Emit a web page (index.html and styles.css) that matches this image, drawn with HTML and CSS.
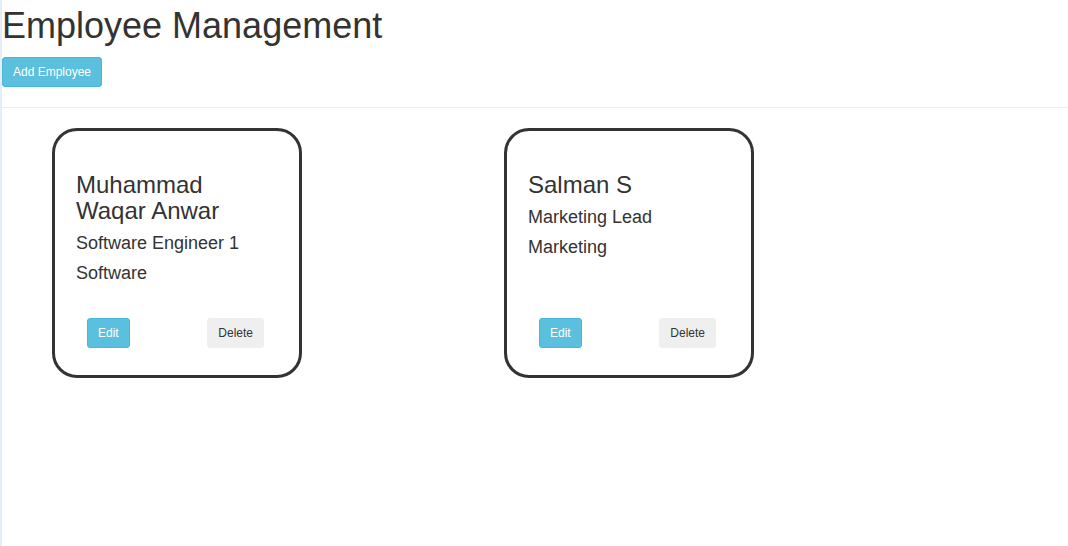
FILE: index.html
```html
<!DOCTYPE html>
<html>
<head>
<meta charset="utf-8">
<link rel="stylesheet" href="styles.css">
</head>
<body>
<div class="page">
  <h1 class="title">Employee Management</h1>
  <button class="btn btn-info">Add Employee</button>
  <hr class="divider">
  <div class="cards">
    <div class="card">
      <h3 class="name">Muhammad Waqar Anwar</h3>
      <h4 class="info">Software Engineer 1</h4>
      <h4 class="info">Software</h4>
      <div class="actions">
        <button class="btn btn-info">Edit</button>
        <button class="btn btn-default">Delete</button>
      </div>
    </div>
    <div class="card">
      <h3 class="name">Salman S</h3>
      <h4 class="info">Marketing Lead</h4>
      <h4 class="info">Marketing</h4>
      <div class="actions">
        <button class="btn btn-info">Edit</button>
        <button class="btn btn-default">Delete</button>
      </div>
    </div>
  </div>
</div>
</body>
</html>
```
FILE: styles.css
```css
html, body {
  margin: 0;
  padding: 0;
  height: 100%;
}
body {
  border-left: 2px solid #e3eef9;
  font-family: "Liberation Sans", Arial, sans-serif;
  font-size: 14px;
  line-height: 1.42857;
  color: #333;
  background: #fff;
  box-sizing: border-box;
}
.title {
  font-size: 36px;
  font-weight: 400;
  line-height: 1.1;
  margin: 6px 0 11px 0;
}
.btn {
  display: inline-block;
  font-family: inherit;
  font-size: 12px;
  line-height: 1.5;
  padding: 5px 10px;
  border-radius: 3px;
  border: 1px solid transparent;
  cursor: pointer;
}
.btn-info {
  background: #5bc0de;
  border-color: #46b8da;
  color: #fff;
}
.btn-default {
  background: #efefef;
  border-color: #efefef;
  color: #333;
}
.divider {
  margin: 20px 0 20px 0;
  border: 0;
  border-top: 1px solid #eee;
}
.cards {
  display: flex;
  gap: 202px;
  padding-left: 50px;
}
.card {
  width: 250px;
  height: 250px;
  box-sizing: border-box;
  border: 3px solid #333;
  border-radius: 25px;
  padding: 20px 22px 27px 21px;
  display: flex;
  flex-direction: column;
}
.name {
  font-size: 24px;
  font-weight: 400;
  line-height: 1.1;
  margin: 21px 0 0 0;
}
.info {
  font-size: 18px;
  font-weight: 400;
  line-height: 1.1;
  margin: 10px 0 0 0;
}
.name + .info {
  margin-top: 10px;
}
.actions {
  margin-top: auto;
  display: flex;
  justify-content: space-between;
  padding: 0 13px 0 11px;
}
```
